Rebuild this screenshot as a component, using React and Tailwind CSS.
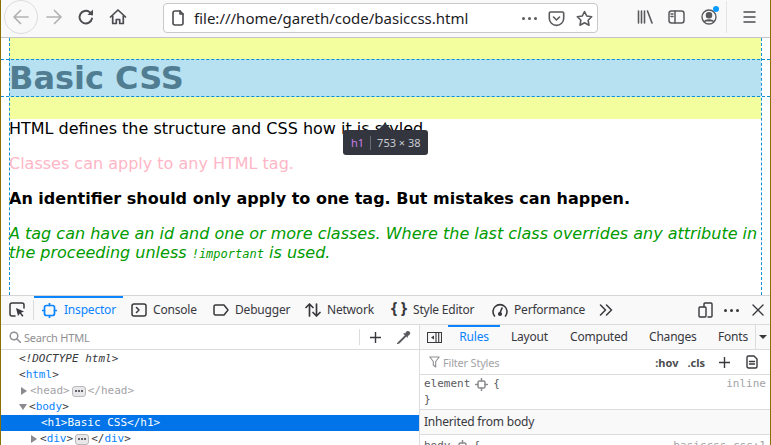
import React from "react";

const ui = "font-['Noto_Sans','Open_Sans',sans-serif]";
const mono = "font-['DejaVu_Sans_Mono','Liberation_Mono',monospace]";

function Tab({ icon, label, active, w, gap = 6 }) {
  return (
    <div
      className={`flex items-center h-full px-[8px] shrink-0 whitespace-nowrap ${active ? "text-[#0a84ff] border-y-2 border-t-[#0a84ff] border-b-transparent" : "text-[#38383d]"}`}
      style={{ width: w, gap }}
    >
      {icon}
      <span className="text-[12px] leading-none tracking-[-0.2px]">{label}</span>
    </div>
  );
}

function Sm({ children, w = 16, h = 16, vb = "0 0 16 16", sw = 1.6, color = "#38383d" }) {
  return (
    <svg width={w} height={h} viewBox={vb} fill="none" stroke={color} strokeWidth={sw} strokeLinecap="round" strokeLinejoin="round" className="shrink-0 block">
      {children}
    </svg>
  );
}

function NodeIcon() {
  return (
    <Sm w={13} h={13} vb="0 0 13 13" sw={1.5} color="#8a8a8f">
      <rect x="3" y="3" width="7" height="7" rx="1.5" />
      <path d="M6.5 0.5V3M6.500 10v2.500M.5 6.500H3M10 6.500h2.500" />
    </Sm>
  );
}

function Ell() {
  return (
    <span className="inline-flex items-center justify-center w-[14px] h-[11px] bg-[#e8e8ea] border border-[#b9b9bc] rounded-[3px] mx-[2px] gap-[1px]">
      <span className="w-[2px] h-[2px] bg-[#38383d] rounded-full" />
      <span className="w-[2px] h-[2px] bg-[#38383d] rounded-full" />
      <span className="w-[2px] h-[2px] bg-[#38383d] rounded-full" />
    </span>
  );
}

function Dots({ color }) {
  return (
    <span className="inline-flex gap-[3px] items-center">
      <span className="w-[3px] h-[3px] rounded-full" style={{ background: color }} />
      <span className="w-[3px] h-[3px] rounded-full" style={{ background: color }} />
      <span className="w-[3px] h-[3px] rounded-full" style={{ background: color }} />
    </span>
  );
}

export default function App() {
  return (
    <div className={`w-[771px] h-[445px] overflow-hidden flex flex-col border-x border-[#8a7000] bg-white ${ui}`}>
      {/* Browser toolbar */}
      <header className="h-[38px] shrink-0 flex items-center bg-[#f9f9fa] border-b border-[#c4c4c6] pb-[3px]">
        <div className="w-[34px] h-[34px] ml-[3px] rounded-full border border-[#dcdcde] flex items-center justify-center shrink-0">
          <Sm w={18} h={18} sw={1.7} color="#b2b2b3" vb="0 0 18 18"><path d="M16 9H2M8.500 2.500 2 9l6.500 6.500" /></Sm>
        </div>
        <div className="ml-[7px] shrink-0">
          <Sm w={18} h={18} sw={1.7} color="#b2b2b3" vb="0 0 18 18"><path d="M2 9h14M9.500 2.500 16 9l-6.500 6.500" /></Sm>
        </div>
        <div className="ml-[14px] shrink-0">
          <Sm w={18} h={18} sw={1.9} color="#4c4c50" vb="0 0 18 18"><path d="M15 10.500A6.300 6.300 0 1 1 12.500 4L15 6.500" /><path d="M16 1.500v5.500h-5.500" fill="#4c4c50" stroke="none" /></Sm>
        </div>
        <div className="ml-[14px] shrink-0">
          <Sm w={18} h={18} sw={1.7} color="#4c4c50" vb="0 0 18 18"><path d="M1.500 9 9 2l7.500 7" /><path d="M3.700 8v7.500h3.600v-4h3.400v4h3.600V8" /></Sm>
        </div>
        {/* URL bar */}
        <div className="ml-[36px] h-[30px] w-[435px] flex items-center bg-white border border-[#c8c8ca] rounded-[4px] shrink-0 mt-[2px]">
          <div className="ml-[6px]">
            <Sm w={16} h={16} sw={1.6} color="#4c4c50"><path d="M3 3a2 2 0 0 1 2-2h5l3 3v9a2 2 0 0 1-2 2H5a2 2 0 0 1-2-2z" /><path d="M10 1v3h3" /></Sm>
          </div>
          <span className="ml-[8px] text-[15px] leading-none text-[#1c1c1f] whitespace-nowrap">file:///home/gareth/code/basiccss.html</span>
          <span className="ml-auto flex"><Dots color="#5a5a5e" /></span>
          <div className="ml-[11px]">
            <Sm w={17} h={17} vb="0 0 17 17" sw={1.6} color="#5a5a5e"><path d="M2.500 2h12a1.200 1.200 0 0 1 1.200 1.200v5a7.200 7.200 0 0 1-14.400 0v-5A1.200 1.200 0 0 1 2.500 2z" /><path d="m5.500 7 3 3 3-3" /></Sm>
          </div>
          <div className="ml-[11px] mr-[4px]">
            <Sm w={17} h={17} vb="0 0 17 17" sw={1.6} color="#5a5a5e"><path d="m8.500 1.500 2.200 4.500 5 .7-3.600 3.500.9 5-4.500-2.400L4 15.200l.9-5L1.300 6.700l5-.7z" /></Sm>
          </div>
        </div>
        <div className="ml-[39px] shrink-0">
          <Sm w={16} h={16} sw={1.6} color="#5a5a5e"><path d="M1.500 2v12M4.500 2v12M7.500 2v12M10.500 2 15 14" /></Sm>
        </div>
        <div className="ml-[15px] shrink-0">
          <Sm w={17} h={16} vb="0 0 17 16" sw={1.5} color="#5a5a5e"><rect x="1" y="2" width="15" height="12" rx="2.500" /><path d="M7 2v12M3 5h2M3 7.500h2" /></Sm>
        </div>
        <div className="ml-[16px] relative shrink-0">
          <Sm w={16} h={16} sw={1.4} color="#5a5a5e"><circle cx="8" cy="8" r="7" /><circle cx="8" cy="6.300" r="2.600" fill="#5a5a5e" /><path d="M3.500 12.500c1-2.200 8-2.200 9 0" fill="#5a5a5e" /></Sm>
          <span className="absolute -top-[3px] -right-[2px] w-[6px] h-[6px] rounded-full bg-[#0a9bff]" />
        </div>
        <div className="ml-[9px] w-px h-[32px] bg-[#e4e4e6] shrink-0" />
        <div className="ml-[16px] shrink-0">
          <Sm w={13} h={14} vb="0 0 13 14" sw={1.5} color="#4c4c50"><path d="M.5 2h12M.5 7h12M.5 12h12" strokeLinecap="butt" /></Sm>
        </div>
      </header>

      {/* Page */}
      <main className="relative h-[257px] shrink-0 overflow-hidden font-['DejaVu_Sans',sans-serif] text-black text-[16px] leading-[19px]">
        <div className="ml-[8px] w-[752px] h-[21px] bg-[#f3ff9f]" />
        <h1 className="ml-[8px] w-[752px] h-[38px] bg-[#b7e1f1] text-[32px] leading-[38px] font-bold text-[#517d93] whitespace-nowrap">
          Basic CSS
        </h1>
        <div className="ml-[8px] w-[752px] h-[22px] bg-[#f3ff9f]" />
        <div className="ml-[8px] w-[752px]">
          <p>HTML defines the structure and CSS how it is styled</p>
          <p className="mt-[16px] text-[#ffb6c6]">Classes can apply to any HTML tag.</p>
          <p className="mt-[16px] font-bold">An identifier should only apply to one tag. But mistakes can happen.</p>
          <p className="mt-[16px] italic text-[#009b00]">
            A tag can have an id and one or more classes. Where the last class overrides any attribute in the proceeding unless <code className={`${mono} text-[12px]`}>!important</code> is used.
          </p>
        </div>

        {/* Highlighter guides */}
        <div className="absolute left-[8px] top-0 bottom-0 border-l border-dashed border-[#0a8fd6]" />
        <div className="absolute left-[760px] top-0 bottom-0 border-l border-dashed border-[#0a8fd6]" />
        <div className="absolute left-0 right-0 top-[21px] border-t border-dashed border-[#0a8fd6]" />
        <div className="absolute left-0 right-0 top-[58px] border-t border-dashed border-[#0a8fd6]" />

        {/* Infobar */}
        <div className={`absolute left-[342px] top-[92px] w-[85px] h-[25px] bg-[#33363f] rounded-[3px] flex items-center text-[11px] leading-none ${ui}`}>
          <span className="absolute left-[34px] -top-[7px] w-0 h-0 border-x-[8px] border-x-transparent border-b-[8px] border-b-[#33363f]" />
          <span className="ml-[8px] text-[#c77ee6]">h1</span>
          <span className="ml-[6px] w-px h-[14px] bg-[#6a6d75]" />
          <span className="ml-[6px] text-[#c9ccd2] whitespace-nowrap">753 × 38</span>
        </div>
      </main>

      {/* Devtools */}
      <section className="flex-1 min-h-0 flex flex-col border-t border-[#d4d4d6] bg-white">
        <div className="h-[29px] shrink-0 flex items-center bg-[#f9f9fa] border-b border-[#dcdcde]">
          <div className="w-[32px] h-full flex items-center justify-center shrink-0">
            <Sm w={16} h={16} sw={1.5} color="#38383d">
              <path d="M6 14H3a2 2 0 0 1-2-2V3a2 2 0 0 1 2-2h10a2 2 0 0 1 2 2v3" />
              <path d="m7 6 8 3.500-3 1.200 2.500 3-1.300 1-2.400-3.200L9 14z" fill="#38383d" stroke="none" />
            </Sm>
          </div>
          <div className="w-px h-[20px] bg-[#dcdcde] shrink-0" />
          <Tab w={89} gap={7} active label="Inspector" icon={
            <Sm w={15} h={15} vb="0 0 15 15" sw={1.7} color="#0a84ff"><rect x="2.500" y="2.500" width="10" height="10" rx="2" /><path d="M7.500 0v2.500M7.500 12.500V15M0 7.500h2.500M12.500 7.500H15" /></Sm>
          } />
          <Tab w={82} label="Console" icon={
            <Sm w={16} h={14} vb="0 0 16 14" sw={1.5}><rect x="1" y="1" width="14" height="12" rx="2" /><path d="m5.500 4.500 2.500 2.500-2.500 2.500" /></Sm>
          } />
          <Tab w={92} label="Debugger" icon={
            <Sm w={16} h={12} vb="0 0 16 12" sw={1.5}><path d="M2.500 1H11l4 5-4 5H2.500A1.500 1.500 0 0 1 1 9.500v-7A1.500 1.500 0 0 1 2.500 1z" /></Sm>
          } />
          <Tab w={86} label="Network" icon={
            <Sm w={16} h={16} sw={1.7}><path d="M4.500 14V2M1 5.500 4.500 2 8 5.500M11.500 2v12M8 10.500l3.500 3.500 3.500-3.500" /></Sm>
          } />
          <Tab w={101} label="Style Editor" icon={
            <span className="relative -top-[2px] w-[16px] flex justify-between text-[16px] font-bold leading-none text-[#38383d] font-['Noto_Sans',sans-serif] shrink-0"><span>{"{"}</span><span>{"}"}</span></span>
          } />
          <Tab w={108} label="Performance" icon={
            <Sm w={16} h={15} vb="0 0 16 15" sw={1.6}><path d="M2.500 13A7 7 0 1 1 13.500 13" /><path d="M8 10 10 5" /><circle cx="8" cy="11" r="1.300" fill="#38383d" /></Sm>
          } />
          <div className="ml-[7px] shrink-0">
            <Sm w={14} h={12} vb="0 0 14 12" sw={1.5}><path d="m1.500 1 5 5-5 5M7.500 1l5 5-5 5" /></Sm>
          </div>
          <div className="ml-auto flex items-center shrink-0 pr-[6px]">
            <Sm w={15} h={16} vb="0 0 15 16" sw={1.4}><path d="M6 4.500V2a1 1 0 0 1 1-1h6a1 1 0 0 1 1 1v12a1 1 0 0 1-1 1h-3" /><rect x="1" y="5" width="7" height="10" rx="1" /></Sm>
            <span className="ml-[11px] flex"><Dots color="#38383d" /></span>
            <div className="ml-[13px]">
              <Sm w={12} h={12} vb="0 0 12 12" sw={1.4}><path d="m1 1 10 10M11 1 1 11" /></Sm>
            </div>
          </div>
        </div>

        <div className="flex-1 min-h-0 flex">
          {/* Markup */}
          <div className="w-[419px] shrink-0 flex flex-col border-r border-[#dcdcde]">
            <div className="h-[25px] shrink-0 flex items-center border-b border-[#dcdcde] pl-[8px] pr-[8px]">
              <Sm w={12} h={12} vb="0 0 12 12" sw={1.5} color="#8f8f94"><circle cx="5" cy="5" r="3.800" /><path d="m8 8 3.500 3.500" /></Sm>
              <span className="ml-[3px] text-[11px] leading-none text-[#8f8f94] tracking-[-0.2px]">Search HTML</span>
              <div className="ml-auto w-px h-[16px] bg-[#dcdcde]" />
              <div className="ml-[9px]">
                <Sm w={13} h={13} vb="0 0 13 13" sw={1.4}><path d="M6.500 1v11M1 6.500h11" strokeLinecap="butt" /></Sm>
              </div>
              <div className="ml-[14px]">
                <Sm w={15} h={15} vb="0 0 15 15" sw={1.1} color="#5a5a5e"><path d="M9.500 5.500 3 12l-1.500 1.500L3 13l6.500-6.500" /><path d="m8 3.500 3.500 3.500M9.500 4.500c1-3 2-3.500 3.500-2.500s.5 3-2.500 4" fill="#5a5a5e" /></Sm>
              </div>
            </div>
            <div className={`${mono} text-[11px] leading-[16px] text-[#38383d] pt-[1px]`}>
              <div className="pl-[18px] italic h-[16px]">&lt;!DOCTYPE html&gt;</div>
              <div className="pl-[18px] h-[16px]">&lt;<span className="text-[#0a84ff]">html</span>&gt;</div>
              <div className="pl-[20px] h-[16px] flex items-center text-[#a3a3a6]">
                <span className="w-0 h-0 border-y-[4.500px] border-y-transparent border-l-[6px] border-l-[#8a8a8f] mr-[3px]" />
                <span>&lt;head&gt;</span><Ell /><span>&lt;/head&gt;</span>
              </div>
              <div className="pl-[18px] h-[16px] flex items-center">
                <span className="w-0 h-0 border-x-[4.500px] border-x-transparent border-t-[6px] border-t-[#8a8a8f] mr-[2px]" />
                <span>&lt;<span className="text-[#0a84ff]">body</span>&gt;</span>
              </div>
              <div className="pl-[40px] h-[16px] bg-[#0074e8] text-white">&lt;h1&gt;Basic CSS&lt;/h1&gt;</div>
              <div className="pl-[30px] h-[16px] flex items-center">
                <span className="w-0 h-0 border-y-[4.500px] border-y-transparent border-l-[6px] border-l-[#8a8a8f] mr-[3px]" />
                <span>&lt;<span className="text-[#0a84ff]">div</span>&gt;</span><Ell /><span>&lt;/<span className="text-[#0a84ff]">div</span>&gt;</span>
              </div>
            </div>
          </div>

          {/* Rules */}
          <div className="flex-1 min-w-0 flex flex-col">
            <div className="h-[25px] shrink-0 flex items-center bg-[#f9f9fa] border-b border-[#dcdcde] text-[12px] tracking-[-0.2px] text-[#38383d] relative">
              <div className="w-[28px] flex justify-center shrink-0">
                <Sm w={15} h={13} vb="0 0 15 13" sw={1.1}><rect x=".5" y="1.500" width="14" height="10" /><path d="M9 1.500v10M11.700 1.500v10" /><path d="M7 4.500v4l-3-2z" fill="#38383d" stroke="none" /></Sm>
              </div>
              <div className="w-[52px] h-full text-center leading-[20px] text-[#0a84ff] border-t-2 border-[#0a84ff] shrink-0">Rules</div>
              <span className="ml-[11px] w-[59px] shrink-0">Layout</span>
              <span className="w-[79px] shrink-0">Computed</span>
              <span className="w-[69px] shrink-0">Changes</span>
              <span className="shrink-0">Fonts</span>
              <div className="absolute right-0 top-0 bottom-0 w-[15px] border-l border-[#dcdcde] flex items-center justify-center">
                <span className="w-0 h-0 border-x-[4px] border-x-transparent border-t-[4px] border-t-[#38383d]" />
              </div>
            </div>
            <div className="h-[25px] shrink-0 flex items-center border-b border-[#dcdcde] pl-[9px] pr-[12px]">
              <Sm w={11} h={12} vb="0 0 11 12" sw={1.1} color="#8f8f94"><path d="M.8 1h9.400L6.700 5.500V11L4.300 9V5.500z" /></Sm>
              <span className="ml-[3px] text-[11px] leading-none text-[#a3a3a6] tracking-[-0.2px]">Filter Styles</span>
              <span className="ml-auto text-[11px] font-bold leading-none text-[#4c4c50]">:hov</span>
              <span className="ml-[9px] text-[11px] font-bold leading-none text-[#4c4c50]">.cls</span>
              <div className="ml-[13px]">
                <Sm w={13} h={13} vb="0 0 13 13" sw={1.4}><path d="M6.500 1v11M1 6.500h11" strokeLinecap="butt" /></Sm>
              </div>
              <div className="ml-[15px]">
                <Sm w={12} h={14} vb="0 0 12 14" sw={1.4}><path d="M1 2.500A1.500 1.500 0 0 1 2.500 1H8l3 3v7.500A1.500 1.500 0 0 1 9.500 13h-7A1.500 1.500 0 0 1 1 11.500z" /><path d="M3.500 6.500h5M3.500 9h5" /></Sm>
              </div>
            </div>
            <div className={`${mono} text-[11px] leading-[16px] text-[#5a5a5e] px-[4px] pt-[1px] h-[35px] shrink-0 border-b border-[#dcdcde]`}>
              <div className="flex items-center h-[16px]">
                <span>element</span>
                <span className="mx-[5px]"><NodeIcon /></span>
                <span>{"{"}</span>
                <span className="ml-auto text-[#a3a3a6]">inline</span>
              </div>
              <div className="h-[16px]">{"}"}</div>
            </div>
            <div className="h-[25px] shrink-0 flex items-center bg-[#f9f9fa] border-b border-[#dcdcde] pl-[4px] text-[12px] tracking-[-0.2px] leading-none text-[#38383d]">
              Inherited from body
            </div>
            <div className={`${mono} text-[11px] leading-[16px] text-[#5a5a5e] px-[4px] mt-[3px] flex items-center h-[16px]`}>
              <span>body</span>
              <span className="mx-[5px]"><NodeIcon /></span>
              <span>{"{"}</span>
              <span className="ml-auto text-[#a3a3a6] underline decoration-dotted">basiccss.css:1</span>
            </div>
          </div>
        </div>
      </section>
    </div>
  );
}
